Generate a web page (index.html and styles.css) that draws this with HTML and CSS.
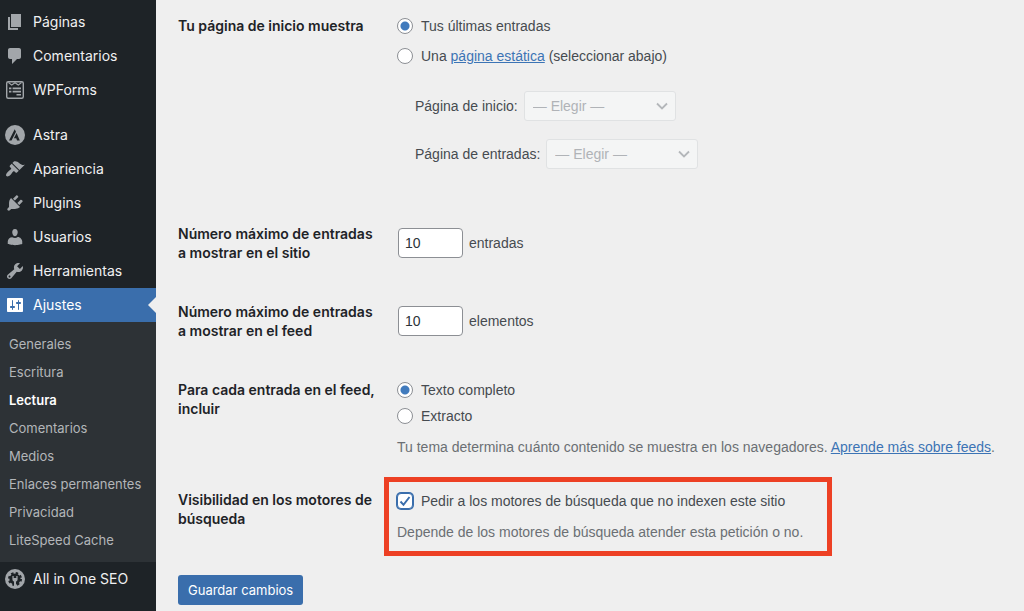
FILE: index.html
```html
<!DOCTYPE html>
<html lang="es">
<head>
    <meta charset="UTF-8">
    <meta name="viewport" content="width=device-width, initial-scale=1.0">
    <title>Ajustes de lectura</title>
    <link rel="stylesheet" href="styles.css">
</head>
<body>
    <div class="admin">
        <!-- Admin menu -->
        <nav class="menu">
            <ul class="menu-list">
                <li>
                    <a class="menu-link" href="#">
                        <svg class="icon" viewBox="0 0 20 20"><path d="M6 15V2h10v13H6zm-1 1h8v2H3V5h2v11z"/></svg>
                        Páginas
                    </a>
                </li>
                <li>
                    <a class="menu-link" href="#">
                        <svg class="icon" viewBox="0 0 20 20"><path d="M5 2h9c1.1 0 2 .9 2 2v7c0 1.1-.9 2-2 2h-2l-5 5v-5H5c-1.1 0-2-.9-2-2V4c0-1.1.9-2 2-2z"/></svg>
                        Comentarios
                    </a>
                </li>
                <li>
                    <a class="menu-link" href="#">
                        <svg class="icon" viewBox="0 0 20 20">
                            <rect x="1.7" y="1.7" width="16.6" height="16.6" rx="1.5" fill="none" stroke="currentColor" stroke-width="1.4"/>
                            <path d="M3.5 2.5l3.2 2.6L10 2.8l3.3 2.3 3.2-2.6" fill="none" stroke="currentColor" stroke-width="1.2"/>
                            <path d="M4 7.6h2.4v1.6H4zM7.6 7.6H16v1.6H7.6zM4 10.8h2.4v1.6H4zM7.6 10.8H16v1.6H7.6zM11.5 14H16v1.6h-4.5z"/>
                        </svg>
                        WPForms
                    </a>
                </li>
                <li class="menu-separator"></li>
                <li>
                    <a class="menu-link" href="#">
                        <svg class="icon" viewBox="0 0 20 20">
                            <circle cx="10" cy="10" r="10"/>
                            <path class="icon-cut" d="M9.7 4.2L4 15.4h2.5L11 6.8zM11.6 8.1l-2.7 5.2h2.3l.9 2.1h2.7z"/>
                        </svg>
                        Astra
                    </a>
                </li>
                <li>
                    <a class="menu-link" href="#">
                        <svg class="icon" viewBox="0 0 20 20"><path d="M14.48 11.06L7.41 3.99l1.5-1.5c.5-.56 2.3-.47 3.51.32 1.21.8 1.43 1.28 2.91 2.1 1.18.64 2.45 1.26 4.45.85zm-.71.71L6.7 4.7 4.93 6.47c-.39.39-.39 1.02 0 1.41l1.06 1.06c.39.39.39 1.03 0 1.42-.6.6-1.43 1.11-2.21 1.69-.35.26-.7.53-1.01.84C1.43 14.23.4 16.08 1.4 17.07c.99 1 2.84-.03 4.18-1.36.31-.31.58-.66.85-1.02.57-.78 1.08-1.61 1.69-2.21.39-.39 1.02-.39 1.41 0l1.06 1.06c.39.39 1.02.39 1.41 0z"/></svg>
                        Apariencia
                    </a>
                </li>
                <li>
                    <a class="menu-link" href="#">
                        <svg class="icon" viewBox="0 0 20 20"><path d="M13.11 4.36L9.87 7.6 8 5.73l3.24-3.24c.35-.34 1.05-.2 1.56.32.52.51.66 1.21.31 1.55zm-8 1.77l.91-1.12 9.01 9.01-1.19.84c-.71.71-2.63 1.16-3.82 1.16H6.14L4.9 17.26c-.59.59-1.54.59-2.12 0-.59-.58-.59-1.53 0-2.12l1.24-1.24v-3.88c0-1.13.4-3.19 1.09-3.89zm7.26 3.97l3.24-3.24c.34-.35 1.04-.21 1.55.31.52.51.66 1.21.31 1.55l-3.24 3.25z"/></svg>
                        Plugins
                    </a>
                </li>
                <li>
                    <a class="menu-link" href="#">
                        <svg class="icon" viewBox="0 0 20 20"><path d="M10 9.25c-2.27 0-2.73-3.44-2.73-3.44C7 4.02 7.82 2 9.97 2c2.16 0 2.98 2.02 2.71 3.81 0 0-.41 3.44-2.68 3.44zM7.25 10.2c.8.5 1.7.8 2.75.8s1.95-.3 2.72-1c2.39 0 4.52 2.33 4.52 4.53v2.49s-3.65 1.13-7.24 1.13c-3.65 0-7.24-1.13-7.24-1.13v-2.49c0-2.25 1.94-4.33 4.49-4.33z"/></svg>
                        Usuarios
                    </a>
                </li>
                <li>
                    <a class="menu-link" href="#">
                        <svg class="icon" viewBox="0 0 20 20"><path d="M16.68 9.77c-1.34 1.34-3.3 1.67-4.95.99l-5.41 6.52c-.99.99-2.59.99-3.58 0s-.99-2.59 0-3.57l6.52-5.42c-.68-1.65-.35-3.61.99-4.95 1.28-1.28 3.12-1.62 4.72-1.06l-2.89 2.89 2.82 2.82 2.86-2.87c.53 1.58.18 3.39-1.08 4.65zM3.81 16.21c.4.39 1.04.39 1.43 0 .4-.4.4-1.04 0-1.43-.39-.4-1.03-.4-1.43 0-.39.39-.39 1.03 0 1.43z"/></svg>
                        Herramientas
                    </a>
                </li>
                <li>
                    <a class="menu-link current" href="#">
                        <svg class="icon" viewBox="0 0 20 20"><path d="M18 16V4c0-.55-.45-1-1-1H3c-.55 0-1 .45-1 1v12c0 .55.45 1 1 1h14c.55 0 1-.45 1-1zM8 11h1c.55 0 1 .45 1 1s-.45 1-1 1H8v1.5c0 .28-.22.5-.5.5s-.5-.22-.5-.5V13H6c-.55 0-1-.45-1-1s.45-1 1-1h1V5.5c0-.28.22-.5.5-.5s.5.22.5.5V11zm5-2h-1c-.55 0-1-.45-1-1s.45-1 1-1h1V5.5c0-.28.22-.5.5-.5s.5.22.5.5V7h1c.55 0 1 .45 1 1s-.45 1-1 1h-1v5.5c0 .28-.22.5-.5.5s-.5-.22-.5-.5V9z"/></svg>
                        Ajustes
                    </a>
                    <ul class="submenu">
                        <li><a href="#">Generales</a></li>
                        <li><a href="#">Escritura</a></li>
                        <li><a class="active" href="#">Lectura</a></li>
                        <li><a href="#">Comentarios</a></li>
                        <li><a href="#">Medios</a></li>
                        <li><a href="#">Enlaces permanentes</a></li>
                        <li><a href="#">Privacidad</a></li>
                        <li><a href="#">LiteSpeed Cache</a></li>
                    </ul>
                </li>
                <li>
                    <a class="menu-link" href="#">
                        <svg class="icon" viewBox="0 0 20 20">
                            <circle cx="10" cy="10" r="10"/>
                            <circle class="icon-cut" cx="10" cy="10" r="5.6"/>
                            <circle class="icon-teeth" cx="10" cy="10" r="5.8"/>
                            <path d="M7.4 7h1.3v2h2.6V7h1.3v3.2c0 1.3-.7 2-1.6 2.3v5H9v-5c-.9-.3-1.6-1-1.6-2.3z"/>
                        </svg>
                        All in One SEO
                    </a>
                </li>
            </ul>
        </nav>

        <!-- Reading settings -->
        <main class="content">
            <form class="settings">
                <div class="row row-first" role="group" aria-labelledby="frontTitle">
                    <div class="row-title" id="frontTitle">Tu página de inicio muestra</div>
                    <div class="row-field">
                        <div class="options options-wide">
                            <div class="option">
                                <input type="radio" id="frontPosts" name="show_on_front" checked>
                                <label for="frontPosts">Tus últimas entradas</label>
                            </div>
                            <div class="option">
                                <input type="radio" id="frontPage" name="show_on_front">
                                <label for="frontPage">Una <a href="#">página estática</a> (seleccionar abajo)</label>
                            </div>
                        </div>
                        <div class="page-selects">
                            <div class="inline-field">
                                <label for="pageOnFront">Página de inicio:</label>
                                <select id="pageOnFront" disabled><option>— Elegir —</option></select>
                            </div>
                            <div class="inline-field">
                                <label for="pageForPosts">Página de entradas:</label>
                                <select id="pageForPosts" disabled><option>— Elegir —</option></select>
                            </div>
                        </div>
                    </div>
                </div>

                <div class="row">
                    <label class="row-title" for="postsPerPage">Número máximo de entradas a mostrar en el sitio</label>
                    <div class="row-field inline-field">
                        <input type="number" id="postsPerPage" value="10">
                        entradas
                    </div>
                </div>

                <div class="row">
                    <label class="row-title" for="postsPerRss">Número máximo de entradas a mostrar en el feed</label>
                    <div class="row-field inline-field">
                        <input type="number" id="postsPerRss" value="10">
                        elementos
                    </div>
                </div>

                <div class="row" role="group" aria-labelledby="feedTitle">
                    <div class="row-title" id="feedTitle">Para cada entrada en el feed, incluir</div>
                    <div class="row-field row-field-tall">
                        <div class="options">
                            <div class="option">
                                <input type="radio" id="feedFull" name="rss_use_excerpt" checked>
                                <label for="feedFull">Texto completo</label>
                            </div>
                            <div class="option">
                                <input type="radio" id="feedExcerpt" name="rss_use_excerpt">
                                <label for="feedExcerpt">Extracto</label>
                            </div>
                        </div>
                        <p class="description">Tu tema determina cuánto contenido se muestra en los navegadores. <a href="#">Aprende más sobre feeds</a>.</p>
                    </div>
                </div>

                <div class="row" role="group" aria-labelledby="visibilityTitle">
                    <div class="row-title" id="visibilityTitle">Visibilidad en los motores de búsqueda</div>
                    <div class="row-field highlight">
                        <div class="option">
                            <input type="checkbox" id="blogPublic" checked>
                            <label for="blogPublic">Pedir a los motores de búsqueda que no indexen este sitio</label>
                        </div>
                        <p class="description">Depende de los motores de búsqueda atender esta petición o no.</p>
                    </div>
                </div>

                <button class="submit" type="submit">Guardar cambios</button>
            </form>
        </main>
    </div>
</body>
</html>
```

FILE: styles.css
```css
* {
    box-sizing: border-box;
}

body {
    margin: 0;
    background-color: #efefef;
    color: #464b50;
    font-family: Inter, "Liberation Sans", sans-serif;
    font-size: 14px;
    line-height: 20px;
}

ul {
    list-style: none;
    margin: 0;
    padding: 0;
}

a {
    color: #3c74b5;
}

.admin {
    display: flex;
    min-height: 100vh;
}

/* Menu */
.menu {
    flex: none;
    width: 156px;
    padding-top: 5px;
    background-color: #1e2327;
}

.menu-link {
    display: flex;
    align-items: center;
    gap: 8px;
    height: 34px;
    padding-left: 5px;
    color: #f0f0f1;
    text-decoration: none;
    white-space: nowrap;
    position: relative;
}

.menu-separator {
    height: 11px;
}

.menu-link.current {
    background-color: #3a6eac;
    color: #fff;
}

.menu-link.current::after {
    content: "";
    position: absolute;
    right: 0;
    top: 9px;
    border: 8px solid transparent;
    border-left-width: 0;
    border-right-color: #efefef;
}

.icon {
    flex: none;
    width: 20px;
    height: 20px;
    color: #a2a6aa;
    fill: currentColor;
}

.current .icon {
    color: #fff;
}

.icon-cut {
    fill: #1e2327;
}

.icon-teeth {
    fill: none;
    stroke: #1e2327;
    stroke-width: 2.4;
    stroke-dasharray: 2.4 2.155;
}

.submenu {
    padding: 8px 0;
    background-color: #2d3236;
}

.submenu a {
    display: block;
    padding: 4px 9px;
    color: #b3b6b9;
    font-size: 13px;
    text-decoration: none;
    white-space: nowrap;
}

.submenu a.active {
    color: #fff;
    font-weight: 600;
}

/* Settings form */
.content {
    flex: 1;
    min-width: 0;
    padding-left: 22px;
}

.row {
    display: grid;
    grid-template-columns: 200px 1fr;
    column-gap: 19px;
    align-items: center;
}

.row-title {
    align-self: start;
    padding: 20px 0;
    color: #1e2327;
    font-weight: 600;
    line-height: 19px;
}

.row-field {
    font-family: "Liberation Sans", Arial, sans-serif;
}

.row-first {
    align-items: start;
    padding-bottom: 35px;
}

.row-first .row-title {
    padding-top: 16px;
}

.row-first .row-field {
    padding-top: 13px;
}

.row-field-tall {
    padding: 17px 0 13px;
}

.options-wide {
    display: grid;
    gap: 4px;
}

.option {
    display: flex;
    align-items: center;
    gap: 8px;
    min-height: 26px;
}

.page-selects {
    display: grid;
    gap: 18px;
    margin: 22px 0 0 18px;
}

.inline-field {
    display: flex;
    align-items: center;
    gap: 6px;
}

.description {
    margin: 8px 0 0;
    color: #6b6f74;
}

.highlight {
    justify-self: start;
    margin: 7px 0 0 -13px;
    padding: 6px 24px 9px 8px;
    border: 5px solid #ed4024;
}

/* Controls */
input,
select,
button {
    margin: 0;
    font: inherit;
}

input[type="radio"],
input[type="checkbox"] {
    appearance: none;
    flex: none;
    width: 16px;
    height: 16px;
    border: 1px solid #8c8f94;
    background: #fff center / 100% no-repeat;
}

input[type="radio"] {
    border-radius: 50%;
}

input[type="radio"]:checked {
    background-image: radial-gradient(circle, #417bbd 4px, transparent 5px);
}

input[type="checkbox"] {
    border-color: #3a6eac;
    border-radius: 4px;
    box-shadow: 0 0 0 1px #3a6eac;
}

input[type="checkbox"]:checked {
    background-image: url("data:image/svg+xml,%3Csvg xmlns='http://www.w3.org/2000/svg' viewBox='0 0 14 14'%3E%3Cpath d='M2.5 7.5L5.5 10.8L11.5 3' fill='none' stroke='%233a6eac' stroke-width='2'/%3E%3C/svg%3E");
}

input[type="number"] {
    appearance: textfield;
    width: 65px;
    height: 30px;
    margin-left: 1px;
    padding: 0 6px;
    border: 1px solid #8c8f94;
    border-radius: 4px;
    background-color: #fff;
    color: #2c3338;
}

select {
    appearance: none;
    width: 152px;
    height: 30px;
    padding: 0 24px 0 8px;
    border: 1px solid #e0e2e3;
    border-radius: 3px;
    background: #f4f5f5 url("data:image/svg+xml,%3Csvg xmlns='http://www.w3.org/2000/svg' viewBox='0 0 12 8'%3E%3Cpath d='M1 1.5l5 5 5-5' fill='none' stroke='%23b4b7ba' stroke-width='1.8'/%3E%3C/svg%3E") no-repeat right 7px center / 12px 8px;
    color: #b0b3b7;
    opacity: 1;
}

.submit {
    height: 30px;
    margin-top: 19px;
    padding: 0 10px;
    border: 0;
    border-radius: 3px;
    background-color: #3a6eac;
    color: #fff;
    font-size: 13px;
    cursor: pointer;
}
```
